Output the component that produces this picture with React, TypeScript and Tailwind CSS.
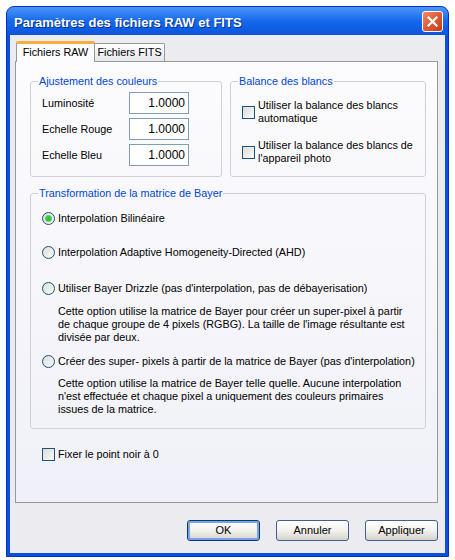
import React from 'react'

function Checkbox() {
  return (
    <span className="w-[13px] h-[13px] shrink-0 border border-[#1c5180] bg-linear-to-br from-[#dcdcd7] to-[#fbfbf9]" />
  )
}

function Radio({ checked = false }: { checked?: boolean }) {
  return (
    <span className="w-[13px] h-[13px] shrink-0 rounded-full border border-[#1c5180] bg-linear-to-br from-[#dcdcd7] to-[#fbfbf9] flex items-center justify-center">
      {checked && <span className="w-[5px] h-[5px] rounded-full bg-[#3ac23a] shadow-[0_0_0_1px_#5fd35f]" />}
    </span>
  )
}

function Group({ title, className, children }: { title: string; className?: string; children: React.ReactNode }) {
  return (
    <fieldset className={'border border-[#d0d0d8] rounded-[3px] px-0 ' + (className ?? '')}>
      <legend className="ml-[7px] px-[1px] text-[#0046d5] leading-[13px]">{title}</legend>
      {children}
    </fieldset>
  )
}

function NumberField({ label }: { label: string }) {
  return (
    <div className="flex items-center h-[22px]">
      <span className="w-[87px]">{label}</span>
      <div className="w-[60px] h-[22px] border border-[#7f9db9] bg-white flex items-center justify-end pr-[3px] text-[12px]">
        1.0000
      </div>
    </div>
  )
}

function Button({ label, isDefault = false }: { label: string; isDefault?: boolean }) {
  return (
    <button
      type="button"
      className={
        'w-[73px] h-[21px] rounded-[3px] border bg-linear-to-b from-white via-[#f2f2ee] to-[#d6d3cb] text-[11px] text-black ' +
        (isDefault ? 'border-[#003c74] shadow-[inset_0_0_0_2px_#7ba2e7]' : 'border-[#3f5f95]')
      }
    >
      {label}
    </button>
  )
}

export default function App() {
  return (
    <div className="w-[455px] h-[560px] bg-white pt-[6px] pl-[6px] font-['Liberation_Sans',Arial,sans-serif] text-[10.8px] leading-[13px] text-black">
      <div className="w-[443px] rounded-t-[8px] overflow-hidden bg-[#0b4fdf] border border-[#0a2fb8]">
        {/* Title bar */}
        <div className="h-[28px] flex items-center justify-between pl-[7px] pr-[5px] bg-linear-to-b from-[#4a95f8] via-[#1468ec] to-[#0b55dc]">
          <span className="text-white font-bold text-[13px] pt-[3px] [text-shadow:1px_1px_0_#0a2d8c]">
            Paramètres des fichiers RAW et FITS
          </span>
          <span className="w-[21px] h-[21px] rounded-[3px] border border-white bg-linear-to-br from-[#f08a6a] via-[#dd5a34] to-[#c23c16] flex items-center justify-center mt-[1px]">
            <svg width="11" height="11" viewBox="0 0 11 11">
              <path d="M1.5 1.5 L9.5 9.5 M9.5 1.5 L1.5 9.5" stroke="white" strokeWidth="2.2" strokeLinecap="square" />
            </svg>
          </span>
        </div>

        {/* Body */}
        <div className="mx-[3px] mb-[3px] bg-[#ecebef] pt-[6px] pl-[5px] pr-[7px] pb-[12px]">
          {/* Tabs */}
          <div className="flex items-end h-[20px] pl-[1px]">
            <div className="relative z-10 w-[79px] h-[21px] -mb-[1px] bg-[#fcfcfe] border-x border-[#919b9c] border-t-[3px] border-t-[#f5b03c] rounded-t-[2px] flex items-center justify-center pb-[2px]">
              Fichiers RAW
            </div>
            <div className="w-[70px] h-[18px] bg-linear-to-b from-white to-[#e6e6ec] border-t border-r border-[#919b9c] rounded-tr-[2px] flex items-center justify-center">
              Fichiers FITS
            </div>
          </div>

          {/* Panel */}
          <div className="h-[442px] border border-[#919b9c] bg-linear-to-b from-[#fcfcfe] to-[#f0f0f8] pt-[13px] pl-[14px] pr-[10px]">
            <div className="flex gap-[8px]">
              <Group title="Ajustement des couleurs" className="w-[192px]">
                <div className="pl-[11px] pt-[4px] pb-[10px] flex flex-col gap-[4px]">
                  <NumberField label="Luminosité" />
                  <NumberField label="Echelle Rouge" />
                  <NumberField label="Echelle Bleu" />
                </div>
              </Group>
              <Group title="Balance des blancs" className="w-[196px]">
                <div className="pl-[11px] pt-[11px] flex flex-col gap-[14px]">
                  <div className="flex items-center gap-[3px]">
                    <Checkbox />
                    <span>
                      Utiliser la balance des blancs
                      <br />
                      automatique
                    </span>
                  </div>
                  <div className="flex items-center gap-[3px]">
                    <Checkbox />
                    <span>
                      Utiliser la balance des blancs de
                      <br />
                      l'appareil photo
                    </span>
                  </div>
                </div>
              </Group>
            </div>

            <Group title="Transformation de la matrice de Bayer" className="mt-[10px] w-[396px]">
              <div className="pl-[11px] pt-[12px] pb-[12px] flex flex-col">
                <div className="flex items-center gap-[3px] h-[13px]">
                  <Radio checked />
                  <span>Interpolation Bilinéaire</span>
                </div>
                <div className="flex items-center gap-[3px] h-[13px] mt-[21px]">
                  <Radio />
                  <span>Interpolation Adaptive Homogeneity-Directed (AHD)</span>
                </div>
                <div className="flex items-center gap-[3px] h-[13px] mt-[23px]">
                  <Radio />
                  <span>Utiliser Bayer Drizzle (pas d'interpolation, pas de débayerisation)</span>
                </div>
                <p className="pl-[16px] mt-[10px]">
                  Cette option utilise la matrice de Bayer pour créer un super-pixel à partir
                  <br />
                  de chaque groupe de 4 pixels (RGBG). La taille de l'image résultante est
                  <br />
                  divisée par deux.
                </p>
                <div className="flex items-center gap-[3px] h-[13px] mt-[11px]">
                  <Radio />
                  <span>Créer des super- pixels à partir de la matrice de Bayer (pas d'interpolation)</span>
                </div>
                <p className="pl-[16px] mt-[9px]">
                  Cette option utilise la matrice de Bayer telle quelle. Aucune interpolation
                  <br />
                  n'est effectuée et chaque pixel a uniquement des couleurs primaires
                  <br />
                  issues de la matrice.
                </p>
              </div>
            </Group>

            <div className="flex items-center gap-[3px] mt-[19px] ml-[12px]">
              <Checkbox />
              <span>Fixer le point noir à 0</span>
            </div>
          </div>

          {/* Buttons */}
          <div className="flex justify-end gap-[16px] mt-[17px]">
            <Button label="OK" isDefault />
            <Button label="Annuler" />
            <Button label="Appliquer" />
          </div>
        </div>
      </div>
    </div>
  )
}
